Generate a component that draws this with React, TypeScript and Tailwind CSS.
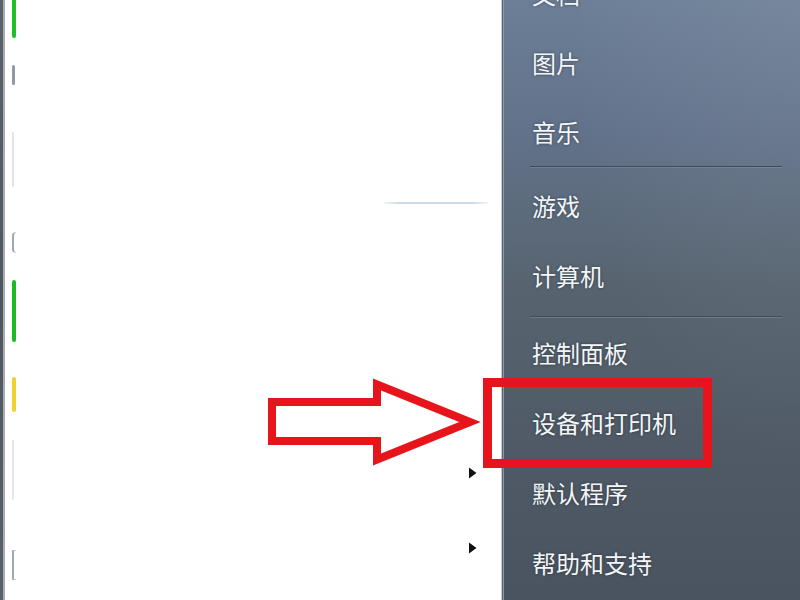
import React from 'react';

type Group = { items: string[]; h: number };

const groups: Group[] = [
  { items: ['文档', '图片', '音乐'], h: 69 },
  { items: ['游戏', '计算机'], h: 70 },
  { items: ['控制面板', '设备和打印机', '默认程序', '帮助和支持'], h: 70 },
];

function Separator({ className = '' }: { className?: string }) {
  return (
    <div className={`ml-[28px] mr-[18px] flex flex-col ${className}`}>
      <div className="h-px bg-[#3f4b58]" />
      <div className="h-px bg-[#7d8c9c]/60" />
    </div>
  );
}

function Triangle({ className = '' }: { className?: string }) {
  return (
    <svg width="9" height="12" viewBox="0 0 9 12" className={className}>
      <path d="M1 0.5 L8.5 6 L1 11.5 Z" fill="#111" />
    </svg>
  );
}

export default function App() {
  const font = { fontFamily: '"Noto Sans CJK SC", "Noto Sans", sans-serif' };
  return (
    <div className="relative w-[800px] h-[600px] flex overflow-hidden bg-white" style={font}>
      {/* left frame edge */}
      <div className="w-[3px] bg-[linear-gradient(180deg,#5c626a,#50565e,#5a6068)]" />
      <div className="w-[2px] bg-[#a7adb5]" />

      {/* left program list */}
      <div className="flex-1 flex bg-white">
        <div className="pl-[7px] w-[20px] flex flex-col">
          <div className="h-[38px] w-[4px] rounded-b-full bg-[#22bd2a]" />
          <div className="mt-[27px] h-[20px] w-[3px] rounded-full bg-[#8e99aa]" />
          <div className="mt-[47px] h-[55px] w-[2px] rounded-full bg-[#e2e5e8]" />
          <div className="mt-[45px] h-[21px] w-[4px] rounded-l-full border-l-2 border-y border-[#9ea7b2] border-y-[#c9ced4]" />
          <div className="mt-[27px] h-[62px] w-[4px] rounded-full bg-[#1fb925]" />
          <div className="mt-[35px] h-[35px] w-[4px] rounded-full bg-[#f1d232]" />
          <div className="mt-[28px] h-[60px] w-[2px] rounded-full bg-[#e4e6e8]" />
          <div className="mt-[50px] h-[30px] w-[4px] border-l-2 border-y border-[#a0a7ae] border-y-[#c5cace]" />
        </div>
        <div className="flex-1 flex flex-col items-end">
          <div className="mt-[202px] mr-[13px] w-[104px] h-[2px] bg-[linear-gradient(90deg,rgba(200,212,226,0.2),#cdd8e4_15%,#cdd8e4_85%,rgba(200,212,226,0.2))]" />
          <Triangle className="mt-[263px] mr-[24px]" />
          <Triangle className="mt-[63px] mr-[24px]" />
        </div>
      </div>

      {/* right dark column */}
      <div className="w-[299px] border-l border-[#c3cad2] shadow-[inset_1px_0_0_#58687a,inset_2px_0_0_#8696a9] bg-[radial-gradient(ellipse_at_top_right,rgba(255,255,255,0.07),transparent_55%),linear-gradient(180deg,#6c7f96_0%,#62728a_22%,#57646f_48%,#505b67_72%,#4a5460_100%)]">
        <div className="mt-[-41px] flex flex-col">
          {groups.map((g, gi) => (
            <div key={gi} className="flex flex-col">
              {gi === 1 && <Separator className="mb-[3px]" />}
              {gi === 2 && <Separator className="mt-[5px]" />}
              {g.items.map((t) => (
                <div
                  key={t}
                  style={{ height: g.h }}
                  className="flex items-center pl-[30px] text-[24px] leading-none text-[#f4f6f8] [text-shadow:0_0_3px_rgba(20,30,40,0.6)]"
                >
                  {t}
                </div>
              ))}
            </div>
          ))}
        </div>
      </div>

      {/* annotation overlay */}
      <div className="absolute left-[483px] top-[378px] w-[229px] h-[90px] border-[9px] border-[#e8141c] pointer-events-none" />
      <svg className="absolute left-0 top-0 pointer-events-none" width="800" height="600">
        <polygon
          points="272,402 377,402 377,384.5 470,422 377,459.5 377,441 272,441"
          fill="none"
          stroke="#e8141c"
          strokeWidth="8"
          strokeLinejoin="miter"
          strokeMiterlimit="4"
        />
      </svg>
    </div>
  );
}
